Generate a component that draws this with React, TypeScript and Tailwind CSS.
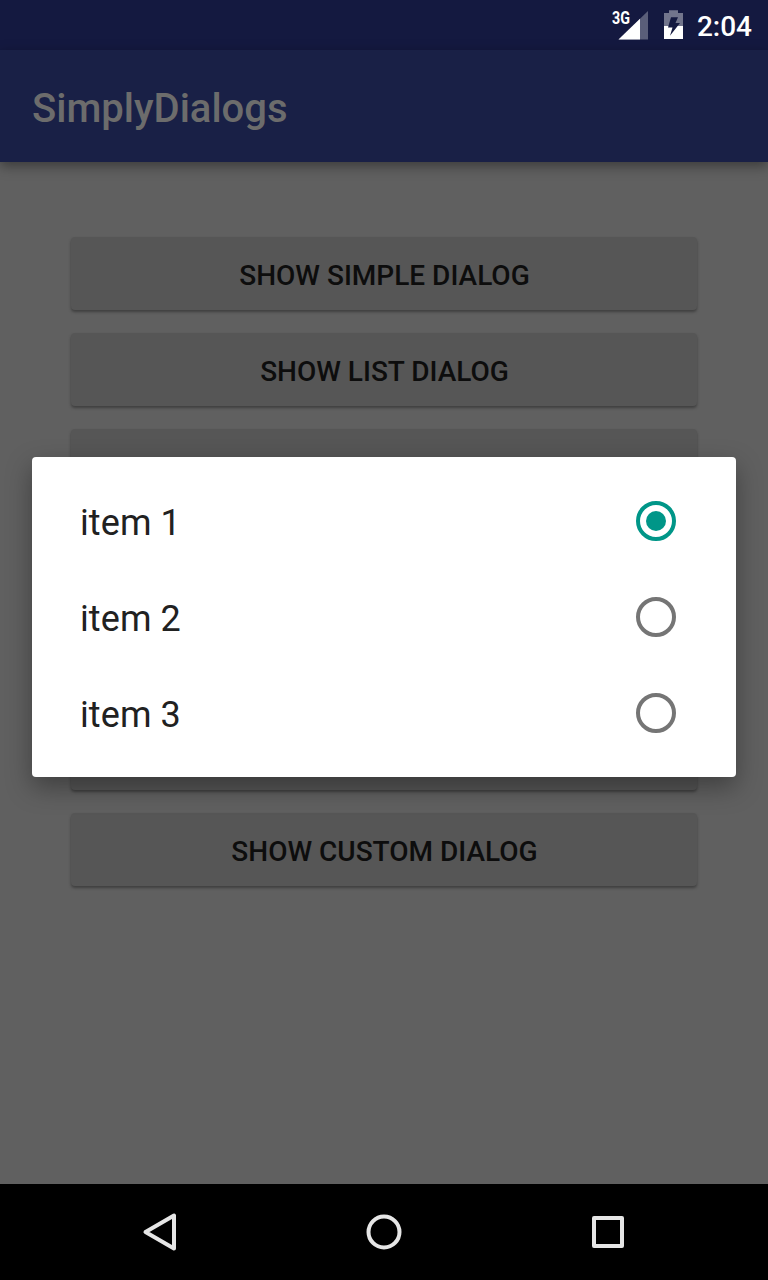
import React, { useState } from "react";

const actions = [
  "Show simple dialog",
  "Show list dialog",
  "Show single choice dialog",
  "Show multi choice dialog",
  "Show progress dialog",
  "Show input dialog",
  "Show custom dialog",
];

const items = ["item 1", "item 2", "item 3"];

function StatusBar() {
  return (
    <div className="flex h-[50px] shrink-0 items-center justify-end bg-[#141940] pr-4 text-white">
      <svg className="mr-[9px] h-[50px] w-[42px] shrink-0" viewBox="0 0 42 50">
        <path d="M36 11V39.500H6.500Z" fill="#fff" opacity=".3" />
        <path d="M28 18.700V39.500H6.500Z" fill="#fff" />
        <text x="0" y="24" fontSize="17.500" fontWeight="700" fill="#fff" textLength="18" lengthAdjust="spacingAndGlyphs">3G</text>
      </svg>
      <svg className="mr-[10px] h-[50px] w-6 shrink-0" viewBox="0 0 24 50">
        <path d="M1 13H6V10.300H15V13H20V26H1Z" fill="#fff" opacity=".4" />
        <path d="M1 26H20V39H1Z" fill="#fff" />
        <path d="M8 17.300H15L12.500 23H17L7 35.700L9.500 27.500H5Z" fill="#141940" />
      </svg>
      <span className="mt-[3px] text-[28px] leading-none font-medium">2:04</span>
    </div>
  );
}

function Radio({ checked }: { checked: boolean }) {
  return (
    <span className={`flex size-10 items-center justify-center rounded-full border-4 ${checked ? "border-[#009688]" : "border-[#757575]"}`}>
      {checked && <span className="size-5 rounded-full bg-[#009688]" />}
    </span>
  );
}

export default function App() {
  const [selected, setSelected] = useState(0);
  return (
    <div className="relative flex h-[1280px] w-[768px] flex-col overflow-hidden bg-[#606060] font-[Roboto,sans-serif]">
      <StatusBar />
      <header className="z-10 flex h-28 shrink-0 items-center bg-[#192046] px-8 shadow-[0_4px_12px_rgba(0,0,0,0.4)]">
        <h1 className="mt-1.5 text-[40px] leading-none font-medium text-[#6c6c6c]">SimplyDialogs</h1>
      </header>
      <main className="flex flex-1 flex-col gap-[23px] px-[71px] pt-[75px]">
        {actions.map((action) => (
          <button key={action} className="flex h-[73px] w-full shrink-0 items-center justify-center rounded-[4px] bg-[#565656] pt-[4px] pl-px text-[28px] leading-none font-medium text-[#0d0d0d] uppercase shadow-[0_2px_3px_rgba(0,0,0,0.35)]">
            {action}
          </button>
        ))}
      </main>
      <nav className="flex h-24 shrink-0 items-center justify-center gap-32 bg-black">
        <svg className="size-24" viewBox="0 0 96 96" fill="none" stroke="#e6e6e6" strokeWidth="4" strokeLinejoin="round">
          <path d="M33.500 48L62 31.500V64.500Z" />
        </svg>
        <svg className="size-24" viewBox="0 0 96 96" fill="none" stroke="#e6e6e6" strokeWidth="4">
          <circle cx="48" cy="48" r="15.500" />
        </svg>
        <svg className="size-24" viewBox="0 0 96 96" fill="none" stroke="#e6e6e6" strokeWidth="4" strokeLinejoin="round">
          <rect x="34" y="34" width="28" height="28" />
        </svg>
      </nav>
      <div role="dialog" className="absolute top-[457px] left-8 z-20 flex h-80 w-[704px] flex-col rounded-[4px] bg-white py-4 shadow-[0_10px_26px_rgba(0,0,0,0.35)]">
        {items.map((item, index) => (
          <button key={item} onClick={() => setSelected(index)} className="flex h-24 items-center justify-between pr-[60px] pl-12 text-[36px] leading-none tracking-[0.1px] text-[#212121]">
            <span className="mt-1">{item}</span>
            <Radio checked={selected === index} />
          </button>
        ))}
      </div>
    </div>
  );
}
